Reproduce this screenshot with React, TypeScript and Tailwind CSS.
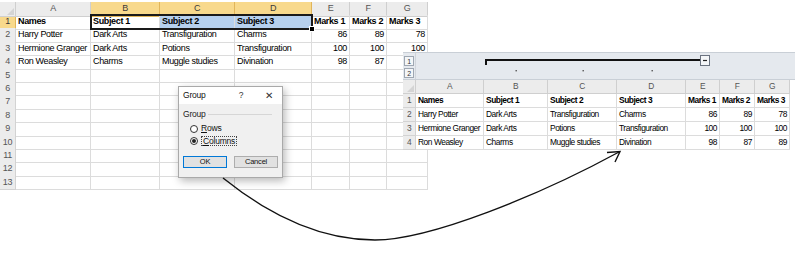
import React from 'react';

type Row = { n: number; cells: string[]; bold?: boolean };

const rows: Row[] = [
  { n: 1, cells: ['Names', 'Subject 1', 'Subject 2', 'Subject 3', 'Marks 1', 'Marks 2', 'Marks 3'], bold: true },
  { n: 2, cells: ['Harry Potter', 'Dark Arts', 'Transfiguration', 'Charms', '86', '89', '78'] },
  { n: 3, cells: ['Hermione Granger', 'Dark Arts', 'Potions', 'Transfiguration', '100', '100', '100'] },
  { n: 4, cells: ['Ron Weasley', 'Charms', 'Muggle studies', 'Divination', '98', '87', '89'] },
];

const letters = ['A', 'B', 'C', 'D', 'E', 'F', 'G'];

function Corner() {
  return (
    <div className="relative bg-[#ECECEC] border-r border-b border-[#CFCFCF]">
      <svg className="absolute right-[1px] bottom-[1px]" width="7" height="7" viewBox="0 0 7 7">
        <polygon points="7,0 7,7 0,7" fill="#D4D4D4" />
      </svg>
    </div>
  );
}

function LeftSheet() {
  const cols = 'grid grid-cols-[16px_75px_69px_75px_77px_38px_37px_41px]';
  const all: Row[] = [...rows];
  for (let i = 5; i <= 13; i++) all.push({ n: i, cells: ['', '', '', '', '', '', ''] });
  return (
    <div className="absolute left-0 top-[2px] w-[428px] bg-white border-r border-[#D0D0D0] text-[9px] tracking-[-0.35px] font-['Liberation_Sans',Arial,sans-serif] text-black">
      <div className={`${cols} h-[13px]`}>
        <Corner />
        {letters.map((l, i) => {
          const sel = i >= 1 && i <= 3;
          return (
            <div
              key={l}
              className={
                sel
                  ? 'flex items-center justify-center bg-[#F8D98C] border-r border-b border-[#E1B55A] text-[#3a3a3a]'
                  : 'flex items-center justify-center bg-[#ECECEC] border-r border-b border-[#CFCFCF] text-[#555]'
              }
            >
              {l}
            </div>
          );
        })}
      </div>
      {all.map((r) => (
        <div key={r.n} className={`${cols} h-[13.4px]`}>
          <div
            className={
              r.n === 1
                ? 'flex items-center justify-center bg-[#F8D98C] border-r border-b border-[#E1B55A] text-[#3a3a3a]'
                : 'flex items-center justify-center bg-[#ECECEC] border-r border-b border-[#D3D3D3] text-[#555]'
            }
          >
            {r.n}
          </div>
          {r.cells.map((c, i) => {
            const num = /^\d+$/.test(c);
            const blue = r.n === 1 && (i === 2 || i === 3);
            return (
              <div
                key={i}
                className={`flex items-center overflow-hidden whitespace-nowrap px-[2px] border-r border-b border-[#DCDCDC] ${
                  num ? 'justify-end' : ''
                } ${r.bold ? 'font-bold' : ''} ${blue ? 'bg-[#B6D0EE]' : ''}`}
              >
                {c}
              </div>
            );
          })}
        </div>
      ))}
      {/* selection outline B1:D1 */}
      <div className="absolute left-[90px] top-[12px] w-[223px] h-[15.5px] border-2 border-[#1a1a1a] pointer-events-none" />
      <div className="absolute left-[309px] top-[24px] w-[6px] h-[6px] bg-black border border-white" />
    </div>
  );
}

function RightSheet() {
  const cols = 'grid grid-cols-[13px_68px_64px_69px_69px_34px_35px_35px]';
  return (
    <div className="absolute left-[403px] top-[52px] w-[392px] bg-white text-[8.4px] tracking-[-0.45px] font-['Liberation_Sans',Arial,sans-serif] text-black">
      {/* outline band */}
      <div className="flex h-[28px] bg-[#E5E9EE] border-t border-b border-[#C9CFD6]">
        <div className="w-[13px] flex flex-col items-center gap-[2px] pt-[3px] border-r border-[#D0D5DB]">
          <div className="w-[10px] h-[10px] flex items-center justify-center bg-[#F4F6F8] border border-[#9EA7B2] text-[7px] leading-none text-[#333]">1</div>
          <div className="w-[10px] h-[10px] flex items-center justify-center bg-[#F4F6F8] border border-[#9EA7B2] text-[7px] leading-none text-[#333]">2</div>
        </div>
        <div className="relative flex-1">
          <svg className="absolute left-0 top-0" width="379" height="27" viewBox="0 0 379 27">
            <path d="M70 12 V7 H285" stroke="#111" strokeWidth="2" fill="none" />
            <rect x="284.5" y="2.5" width="9" height="10" fill="#F4F6F8" stroke="#6b7380" />
            <line x1="287" y1="7.5" x2="291" y2="7.5" stroke="#222" strokeWidth="1.2" />
            <rect x="99.5" y="17" width="1.4" height="1.4" fill="#555" />
            <rect x="166.5" y="17" width="1.4" height="1.4" fill="#555" />
            <rect x="235.5" y="17" width="1.4" height="1.4" fill="#555" />
          </svg>
        </div>
      </div>
      <div className={`${cols} h-[14px]`}>
        <Corner />
        {letters.map((l) => (
          <div key={l} className="flex items-center justify-center bg-[#ECECEC] border-r border-b border-[#CFCFCF] text-[#555]">
            {l}
          </div>
        ))}
      </div>
      {rows.map((r) => (
        <div key={r.n} className={`${cols} h-[14px]`}>
          <div className="flex items-center justify-center bg-[#ECECEC] border-r border-b border-[#D3D3D3] text-[#555]">{r.n}</div>
          {r.cells.map((c, i) => {
            const num = /^\d+$/.test(c);
            return (
              <div
                key={i}
                className={`flex items-center overflow-hidden whitespace-nowrap pl-[2px] pr-[2px] border-r border-b border-[#DCDCDC] ${
                  num ? 'justify-end' : ''
                } ${r.bold ? 'font-bold' : ''}`}
              >
                {c}
              </div>
            );
          })}
        </div>
      ))}
    </div>
  );
}

function Dialog() {
  return (
    <div className="absolute left-[178px] top-[86px] w-[105px] h-[92px] flex flex-col bg-[#F0F0F0] border border-[#A9A9A9] shadow-[2px_3px_8px_rgba(0,0,0,0.28)] text-[8.5px] text-[#111] font-['Liberation_Sans',Arial,sans-serif] tracking-[-0.2px]">
      <div className="h-[17px] flex items-center bg-white pl-[4px]">
        <span>Group</span>
        <span className="ml-auto mr-[22px] text-[#333]">?</span>
        <span className="mr-[9px] text-[#333] text-[10px] leading-none font-light">✕</span>
      </div>
      <div className="relative flex-1 px-[4px] pt-[5px]">
        <div className="flex items-center gap-[2px] h-[10px]">
          <span className="text-[#222]">Group</span>
          <div className="flex-1 h-px bg-[#D6D6D6] mr-[6px]" />
        </div>
        <div className="flex flex-col gap-[3px] pl-[7px] pt-[5px]">
          <div className="flex items-center gap-[3px] h-[9px]">
            <div className="w-[8px] h-[8px] rounded-full border border-[#333] bg-white" />
            <span>
              <span className="underline">R</span>ows
            </span>
          </div>
          <div className="flex items-center gap-[3px] h-[9px]">
            <div className="w-[8px] h-[8px] rounded-full border border-[#333] bg-white flex items-center justify-center">
              <div className="w-[4px] h-[4px] rounded-full bg-[#222]" />
            </div>
            <span className="border border-dotted border-[#444] px-[1px] leading-[8px]">
              <span className="underline">C</span>olumns
            </span>
          </div>
        </div>
        <div className="absolute left-[4px] right-[4px] top-[52px] flex justify-between">
          <div className="w-[44px] h-[12px] flex items-center justify-center bg-[#E1E1E1] border border-[#0078D7] text-[7.5px]">OK</div>
          <div className="w-[44px] h-[12px] flex items-center justify-center bg-[#E1E1E1] border border-[#ADADAD] text-[7.5px]">Cancel</div>
        </div>
      </div>
    </div>
  );
}

function Arrow() {
  return (
    <svg className="absolute left-0 top-0 pointer-events-none" width="800" height="254" viewBox="0 0 800 254">
      <path d="M223 178 Q300 240 375 240 C430 240 540 195 619 152" stroke="#111" strokeWidth="1.4" fill="none" />
      <path d="M607 152.5 L620 151.5 L615 162" stroke="#111" strokeWidth="1.4" fill="none" strokeLinejoin="miter" />
    </svg>
  );
}

export default function App() {
  return (
    <div className="relative w-[800px] h-[254px] bg-white overflow-hidden">
      <LeftSheet />
      <RightSheet />
      <Dialog />
      <Arrow />
    </div>
  );
}
